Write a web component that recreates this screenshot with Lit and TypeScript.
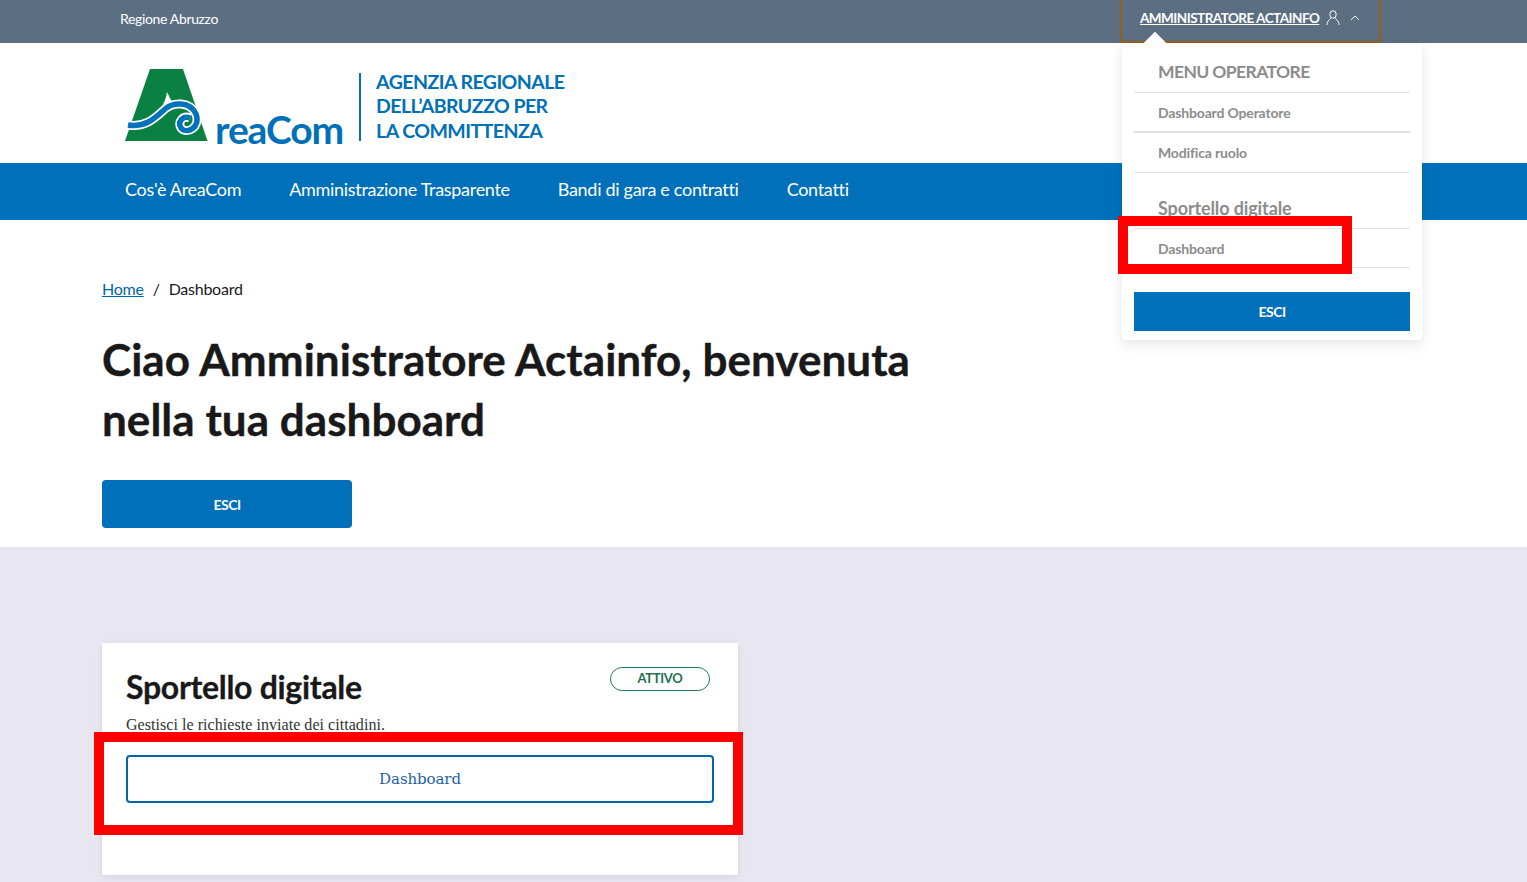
import { LitElement, html, css } from "lit";
import { customElement } from "lit/decorators.js";

@customElement("app-root")
export class AppRoot extends LitElement {
  static styles = css`
    :host { display: block; position: relative; width: 100%; height: 882px; overflow: hidden; background: #fff; font-family: Lato, "Noto Sans", sans-serif; color: #19191a; }
    * { box-sizing: border-box; }
    .top { height: 43px; background: #5c6f82; color: #fff; display: flex; justify-content: space-between; padding: 0 146px 0 120px; }
    .region { font-size: 14px; line-height: 38px; letter-spacing: -0.35px; }
    .user { width: 261px; height: 43px; border: 2px solid #96601a; border-top: 0; display: flex; align-items: center; padding: 0 0 5px 18px; gap: 7px; font-size: 13.5px; font-weight: 700; }
    .user u { letter-spacing: -0.52px; white-space: nowrap; }
    .user svg { flex: none; }
    .head { height: 120px; display: flex; align-items: center; padding: 0 0 0 125px; }
    .mark { display: block; margin: 4px 0 0 0; }
    .brand { font-size: 39px; font-weight: 700; color: #0070b8; line-height: 1; align-self: flex-end; margin: 0 0 14px -2px; letter-spacing: -1.1px; }
    .rule { width: 2px; height: 68px; background: #0070b8; margin: 8px 15px 0 16px; }
    .agency { color: #0070b8; font-size: 19.5px; font-weight: 700; line-height: 24.5px; margin-top: 7px; letter-spacing: -0.55px; white-space: nowrap; }
    nav { height: 57px; background: #0070bb; color: #fff; display: flex; align-items: center; gap: 48px; padding: 0 0 5px 125px; font-size: 18px; letter-spacing: -0.3px; }
    main { height: 327px; padding: 59px 0 0 102px; }
    .crumbs { display: flex; gap: 9px; font-size: 16px; line-height: 20px; letter-spacing: -0.25px; }
    .crumbs a { color: #0066a8; text-decoration: underline; }
    h1 { margin: 30px 0 0; width: 860px; font-size: 44px; line-height: 60px; font-weight: 700; letter-spacing: 0.04px; -webkit-text-stroke: 0.4px #19191a; }
    .esci { display: flex; align-items: center; justify-content: center; background: #0070bb; color: #fff; font-weight: 700; font-size: 14px; letter-spacing: -0.5px; }
    .cta { width: 250px; height: 48px; margin-top: 31px; border-radius: 4px; }
    .band { height: 335px; background: #e8e6f0; padding: 96px 0 0 102px; }
    .card { position: relative; width: 636px; height: 232px; background: #fff; padding: 24px; box-shadow: 0 2px 8px rgba(0,0,0,.08); }
    .card h2 { margin: 0; font-size: 32px; line-height: 40px; font-weight: 700; letter-spacing: -0.3px; -webkit-text-stroke: 0.3px #19191a; }
    .badge { position: absolute; top: 24px; right: 28px; width: 100px; height: 24px; border: 1px solid #1f7a5c; border-radius: 12px; color: #1f6f50; font-size: 13px; font-weight: 700; letter-spacing: -0.3px; display: flex; align-items: center; justify-content: center; padding-bottom: 3px; }
    .desc { margin: 8px 0 0; font-family: "Liberation Serif", serif; font-size: 16px; line-height: 20px; letter-spacing: 0.05px; color: #333; }
    .open { margin-top: 20px; height: 48px; border: 2px solid #0066aa; border-radius: 4px; display: flex; align-items: center; justify-content: center; font-family: "DejaVu Serif", serif; font-size: 15px; letter-spacing: -0.1px; color: #1c5fa8; }
    .panel { position: absolute; left: 1122px; top: 43px; width: 300px; height: 297px; background: #fff; border-radius: 0 0 4px 4px; box-shadow: 0 4px 14px rgba(0,0,0,.1); padding: 0 12px; color: #8c8c8c; }
    .panel::before { content: ""; position: absolute; left: 25px; top: -8px; width: 16px; height: 16px; background: #fff; transform: rotate(45deg); }
    .title { height: 50px; padding: 17px 0 0 24px; font-size: 17.5px; line-height: 24px; font-weight: 700; border-bottom: 1px solid #e3e3e3; letter-spacing: -0.6px; }
    .item { height: 40px; padding-left: 24px; display: flex; align-items: center; font-size: 14px; font-weight: 700; border-bottom: 1px solid #e3e3e3; letter-spacing: -0.16px; }
    .item.thick { border-bottom-width: 2px; }
    .title.second { height: 56px; padding-top: 23px; font-size: 18px; letter-spacing: -0.12px; }
    .item.last { height: 39px; }
    .panel .esci { height: 39px; margin-top: 24px; }
    .mark-red { position: absolute; border: 10px solid #f00; pointer-events: none; }
    .r1 { left: 1118px; top: 216px; width: 234px; height: 58px; }
    .r2 { left: 94px; top: 732px; width: 649px; height: 103px; }
  `;

  render() {
    return html`
      <div class="top">
        <div class="region">Regione Abruzzo</div>
        <div class="user">
          <u>AMMINISTRATORE ACTAINFO</u>
          <svg width="14" height="16" viewBox="0 0 14 16" fill="none" stroke="#fff" stroke-width="1">
            <ellipse cx="7" cy="4.5" rx="3.2" ry="3.8"/>
            <path d="M4.6 7.6 C4.6 9.6 1.4 10.2 .9 15 M9.4 7.6 C9.4 9.6 12.6 10.2 13.1 15"/>
          </svg>
          <svg style="margin-left:3px" width="10" height="6" viewBox="0 0 10 6" fill="none" stroke="#fff" stroke-width="1"><path d="M1 5 L5 1 L9 5"/></svg>
        </div>
      </div>
      <div class="head">
        <svg class="mark" width="92" height="72" viewBox="125 69 92 72">
          <path fill="#0b8043" d="M150 69 H183 L207.5 141 H125 Z"/>
          <path fill="#fff" d="M167 92 C166 100 162 108 155 115 L175 108 Z"/>
          <path fill="none" stroke="#fff" stroke-width="9" d="M128 125 C146 128 156 117 165 109 C173 102 190 101 196 114 C201 127 187 135 181 128 C177 122 183 115 190 118"/>
          <path fill="none" stroke="#0072bc" stroke-width="5.5" d="M128 125 C146 128 156 117 165 109 C173 102 190 101 196 114 C201 127 187 135 181 128 C177 122 183 115 190 118"/>
        </svg>
        <div class="brand">reaCom</div>
        <div class="rule"></div>
        <div class="agency">AGENZIA REGIONALE<br />DELL’ABRUZZO PER<br />LA COMMITTENZA</div>
      </div>
      <nav>
        <span>Cos'è AreaCom</span>
        <span>Amministrazione Trasparente</span>
        <span>Bandi di gara e contratti</span>
        <span>Contatti</span>
      </nav>
      <main>
        <div class="crumbs"><a>Home</a><span>/</span><span>Dashboard</span></div>
        <h1>Ciao Amministratore Actainfo, benvenuta nella tua dashboard</h1>
        <div class="esci cta">ESCI</div>
      </main>
      <section class="band">
        <div class="card">
          <h2>Sportello digitale</h2>
          <div class="badge">ATTIVO</div>
          <p class="desc">Gestisci le richieste inviate dei cittadini.</p>
          <div class="open">Dashboard</div>
        </div>
      </section>
      <aside class="panel">
        <div class="title">MENU OPERATORE</div>
        <div class="item thick">Dashboard Operatore</div>
        <div class="item">Modifica ruolo</div>
        <div class="title second">Sportello digitale</div>
        <div class="item last">Dashboard</div>
        <div class="esci">ESCI</div>
      </aside>
      <div class="mark-red r1"></div>
      <div class="mark-red r2"></div>
    `;
  }
}
